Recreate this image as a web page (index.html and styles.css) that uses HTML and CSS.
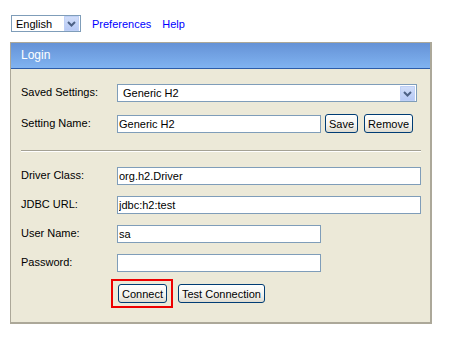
FILE: index.html
```html
<!DOCTYPE html>
<html lang="en">
<head>
  <meta charset="UTF-8">
  <meta name="viewport" content="width=device-width, initial-scale=1.0">
  <title>H2 Console Login</title>
  <link rel="stylesheet" href="styles.css">
</head>
<body>

  <!-- Top toolbar -->
  <div class="toolbar">
    <div class="select select-lang">
      <span class="select-value">English</span>
      <span class="select-arrow">
        <svg width="15" height="15" viewBox="0 0 15 15"><path d="M4 6 L7.5 9.5 L11 6" fill="none" stroke="#4d6185" stroke-width="2"/></svg>
      </span>
    </div>
    <a href="#" class="link">Preferences</a>
    <a href="#" class="link">Help</a>
  </div>

  <!-- Login panel -->
  <div class="login">
    <div class="login-head">Login</div>
    <div class="login-body">

      <div class="form-grid top">
        <label>Saved Settings:</label>
        <div class="select select-saved">
          <span class="select-value">Generic H2</span>
          <span class="select-arrow">
            <svg width="15" height="15" viewBox="0 0 15 15"><path d="M4 6 L7.5 9.5 L11 6" fill="none" stroke="#4d6185" stroke-width="2"/></svg>
          </span>
        </div>

        <label>Setting Name:</label>
        <div class="field-row">
          <input type="text" class="input short" value="Generic H2">
          <button class="button">Save</button>
          <button class="button">Remove</button>
        </div>
      </div>

      <div class="separator"></div>

      <div class="form-grid">
        <label>Driver Class:</label>
        <input type="text" class="input" value="org.h2.Driver">

        <label>JDBC URL:</label>
        <input type="text" class="input" value="jdbc:h2:test">

        <label>User Name:</label>
        <input type="text" class="input short" value="sa">

        <label>Password:</label>
        <input type="password" class="input short">

        <div class="actions">
          <span class="marked">
            <button class="button">Connect</button>
          </span>
          <button class="button">Test Connection</button>
        </div>
      </div>

    </div>
  </div>

</body>
</html>
```

FILE: styles.css
```css
* {
  box-sizing: border-box;
  margin: 0;
  padding: 0;
  font-family: "Liberation Sans", Arial, sans-serif;
}

body {
  background: #fff;
  font-size: 11px;
  color: #000;
}

/* Toolbar */

.toolbar {
  display: flex;
  align-items: center;
  padding: 15px 0 0 11px;
  height: 32px;
}

.link {
  color: #0000ff;
  text-decoration: none;
  font-size: 11px;
  margin-left: 11px;
}

/* Fake XP select */

.select {
  display: flex;
  align-items: center;
  background: #fff;
  border: 1px solid #7f9db9;
  padding: 0 1px 0 4px;
}

.select-lang {
  width: 70px;
  height: 17px;
  font-size: 11px;
}

.select-saved {
  width: calc(100% - 4px);
  height: 18px;
  padding-left: 5px;
}

.select-value {
  flex: 1;
}

.select-arrow {
  width: 15px;
  height: 15px;
  display: flex;
  background: linear-gradient(#d2def9, #b5c8f5);
  border-radius: 1px;
  box-shadow: inset 0 0 0 1px #bfd0f6;
}

/* Login panel */

.login {
  margin: 10px 0 0 10px;
  width: 422px;
  border: 1px solid #aca899;
  border-width: 1px 2px 2px 1px;
  background: #ece9d8;
}

.login-head {
  height: 26px;
  line-height: 25px;
  padding-left: 10px;
  font-size: 12px;
  color: #fff;
  background: linear-gradient(#6592d6, #80b3f1);
  border-bottom: 1px solid #2c5ca9;
}

.login-body {
  padding: 15px 9px 14px 10px;
}

.form-grid {
  display: grid;
  grid-template-columns: 96px 1fr;
  row-gap: 11px;
  align-items: center;
}

.form-grid.top {
  row-gap: 12px;
}

.form-grid label {
  font-size: 11px;
  margin-top: -2px;
}

.field-row {
  display: flex;
  align-items: center;
}

.input {
  height: 18px;
  width: 100%;
  border: 1px solid #7f9db9;
  background: #fff;
  padding: 0 1px;
  font-size: 11px;
  color: #000;
  outline: none;
}

.input.short {
  width: 204px;
}

.field-row .button {
  margin-left: 4px;
}

.field-row .button + .button {
  margin-left: 6px;
}

.separator {
  margin: 17px 0 15px;
  border-top: 1px solid #a4a194;
  border-bottom: 1px solid #fff;
}

/* XP buttons */

.button {
  height: 19px;
  padding: 0 3px;
  font-size: 11px;
  color: #000;
  border: 1px solid #003c74;
  border-radius: 3px;
  background: linear-gradient(#ffffff, #f3f2ed 60%, #dedbd0);
  cursor: pointer;
}

.actions {
  grid-column: 2;
  display: flex;
  align-items: center;
  margin: -4px 0 0 -6px;
}

.marked {
  display: flex;
  border: 2px solid #ee0000;
  padding: 3px 4px 3px 5px;
}

.actions .marked + .button {
  margin-left: 5px;
}
```
